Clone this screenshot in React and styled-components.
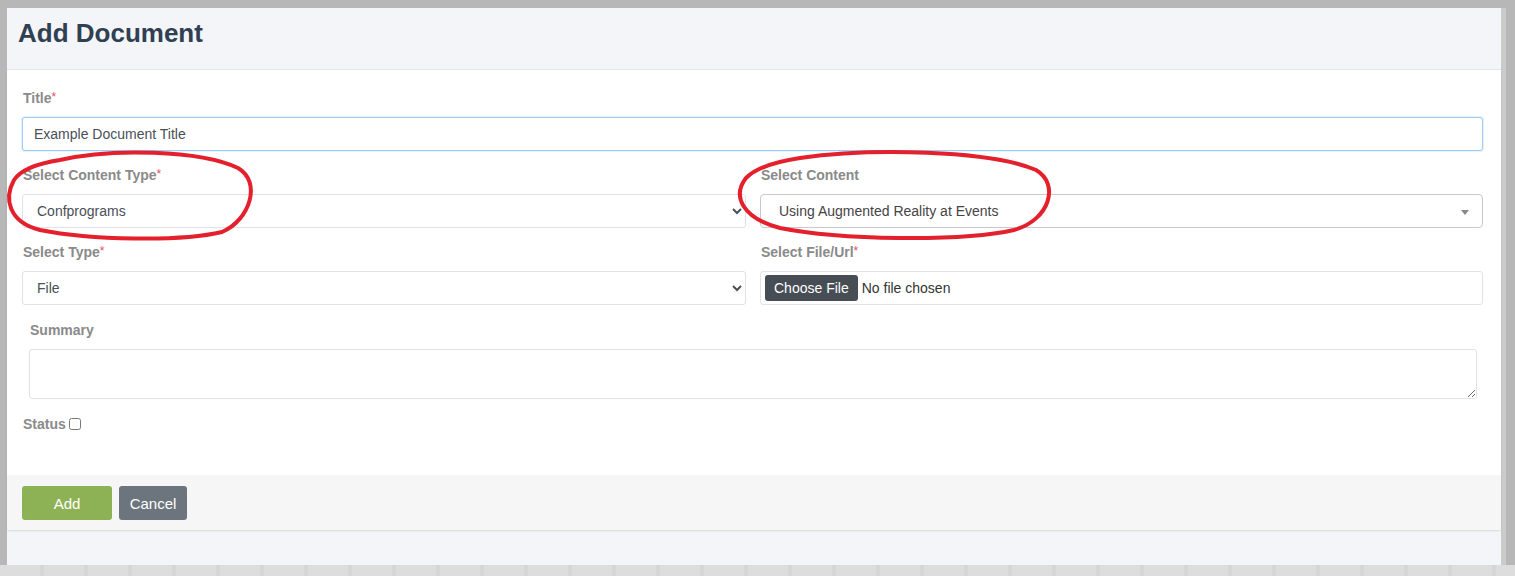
import React from "react";
import styled, { createGlobalStyle } from "styled-components";

const Global = createGlobalStyle`
  html, body { margin: 0; padding: 0; }
  body {
    background: #b6b7b6;
    font-family: "Liberation Sans", Arial, sans-serif;
    width: 1515px;
    height: 576px;
    overflow: hidden;
  }
  * { box-sizing: border-box; }
`;

const Frame = styled.div`
  position: relative;
  width: 1515px;
  height: 576px;
  padding: 8px 9px 0 7px;
  display: flex;
  flex-direction: column;
`;

const Screen = styled.div`
  flex: none;
  height: 557px;
  background: #f4f5f9;
  border-right: 5px solid #cacbca;
  display: flex;
  flex-direction: column;
`;

const BottomStrip = styled.div`
  flex: 1;
  margin: 0 -9px 0 -7px;
  background: repeating-linear-gradient(90deg, #dddddd 0 40px, #d6d6d6 40px 44px);
`;

const Header = styled.div`
  height: 62px;
  padding: 10px 11px 0;
  border-bottom: 1px solid #e6e7ea;
`;

const Heading = styled.h1`
  margin: 0;
  font-size: 26px;
  line-height: 30px;
  font-weight: bold;
  color: #2f4050;
`;

const Card = styled.div`
  background: #fff;
  border-radius: 0 0 3px 3px;
  box-shadow: 0 1px 2px rgba(0, 0, 0, 0.12);
  display: flex;
  flex-direction: column;
`;

const Body = styled.div`
  padding: 18px 18px 41px 15px;
  display: flex;
  flex-direction: column;
`;

const Grid = styled.div`
  display: grid;
  grid-template-columns: 724px 1fr;
  column-gap: 14px;
  margin-top: 14px;
`;

const Field = styled.div`
  display: flex;
  flex-direction: column;
  padding: 0 ${(p) => (p.$inset ? "6px" : "0")} 0 ${(p) => (p.$inset ? "7px" : "0")};
  margin-top: ${(p) => (p.$gap ? "15px" : "0")};
`;

const Label = styled.label`
  display: block;
  height: 20px;
  line-height: 20px;
  margin-bottom: 9px;
  padding-left: 1px;
  font-size: 14px;
  font-weight: bold;
  color: #8a8a8a;
`;

const Req = styled.span`
  color: #e0525c;
  font-weight: normal;
  position: relative;
  top: -2px;
  font-size: 12px;
`;

const TextInput = styled.input`
  height: 34px;
  width: 100%;
  border: 1px solid #9ccbf3;
  border-radius: 3px;
  padding: 0 11px;
  font-family: "Liberation Sans", Arial, sans-serif;
  font-size: 14px;
  color: #495057;
  outline: none;
  box-shadow: 0 0 0 1px rgba(156, 203, 243, 0.25);
`;

const NativeSelect = styled.select`
  height: 34px;
  width: 100%;
  border: 1px solid #dfe2e6;
  border-radius: 3px;
  padding: 0 10px;
  background: #fff;
  font-family: "Liberation Sans", Arial, sans-serif;
  font-size: 14px;
  color: #495057;
`;

const FakeSelect = styled.div`
  position: relative;
  height: 34px;
  border: 1px solid #c9c9c9;
  border-radius: 4px;
  padding: 0 18px;
  display: flex;
  align-items: center;
  font-size: 14px;
  color: #444;
`;

const Caret = styled.span`
  position: absolute;
  right: 13px;
  top: 15px;
  width: 0;
  height: 0;
  border-left: 4px solid transparent;
  border-right: 4px solid transparent;
  border-top: 5px solid #888;
`;

const FileBox = styled.div`
  height: 34px;
  border: 1px solid #dfe2e6;
  border-radius: 3px;
  padding: 0 4px;
  display: flex;
  align-items: center;
`;

const FileInput = styled.input`
  font-family: "Liberation Sans", Arial, sans-serif;
  font-size: 14px;
  color: #333;
  &::file-selector-button {
    height: 26px;
    padding: 0 9px;
    margin-right: 4px;
    border: none;
    border-radius: 3px;
    background: #474d54;
    color: #fff;
    font-family: "Liberation Sans", Arial, sans-serif;
    font-size: 14px;
  }
`;

const TextArea = styled.textarea`
  height: 50px;
  width: 100%;
  border: 1px solid #dfe2e6;
  border-radius: 3px;
  font-family: "Liberation Sans", Arial, sans-serif;
`;

const StatusRow = styled.div`
  margin-top: 15px;
  height: 20px;
  display: flex;
  align-items: center;
  gap: 3px;
  padding-left: 1px;
  font-size: 14px;
  font-weight: bold;
  color: #8a8a8a;
`;

const Check = styled.input`
  margin: 0;
  width: 12px;
  height: 12px;
`;

const Footer = styled.div`
  background: #f6f6f6;
  padding: 11px 15px 10px;
  display: flex;
  gap: 7px;
  border-radius: 0 0 3px 3px;
`;

const Button = styled.button`
  height: 34px;
  width: ${(p) => p.$w}px;
  border: none;
  border-radius: 3px;
  background: ${(p) => p.$bg};
  color: #fff;
  font-family: "Liberation Sans", Arial, sans-serif;
  font-size: 15px;
`;

const Annotations = styled.svg`
  position: absolute;
  left: 0;
  top: 0;
  pointer-events: none;
`;

export default function App() {
  return (
    <>
      <Global />
      <Frame>
        <Screen>
          <Header>
            <Heading>Add Document</Heading>
          </Header>
          <Card>
            <Body>
              <Field>
                <Label>
                  Title<Req>*</Req>
                </Label>
                <TextInput defaultValue="Example Document Title" />
              </Field>
              <Grid>
                <Field>
                  <Label>
                    Select Content Type<Req>*</Req>
                  </Label>
                  <NativeSelect defaultValue="conf">
                    <option value="conf">Confprograms</option>
                  </NativeSelect>
                </Field>
                <Field>
                  <Label>Select Content</Label>
                  <FakeSelect>
                    Using Augmented Reality at Events
                    <Caret />
                  </FakeSelect>
                </Field>
              </Grid>
              <Grid>
                <Field>
                  <Label>
                    Select Type<Req>*</Req>
                  </Label>
                  <NativeSelect defaultValue="file">
                    <option value="file">File</option>
                  </NativeSelect>
                </Field>
                <Field>
                  <Label>
                    Select File/Url<Req>*</Req>
                  </Label>
                  <FileBox>
                    <FileInput type="file" />
                  </FileBox>
                </Field>
              </Grid>
              <Field $inset $gap>
                <Label>Summary</Label>
                <TextArea />
              </Field>
              <StatusRow>
                Status <Check type="checkbox" />
              </StatusRow>
            </Body>
            <Footer>
              <Button $w={90} $bg="#8db255">
                Add
              </Button>
              <Button $w={68} $bg="#6c757d">
                Cancel
              </Button>
            </Footer>
          </Card>
        </Screen>
        <BottomStrip />
        <Annotations width="1515" height="576" viewBox="0 0 1515 576">
          <path
            d="M 60 160 C 110 148 200 150 238 168 C 262 182 250 220 222 232 C 180 242 90 240 40 230 C 8 222 4 198 14 180 C 22 168 40 163 60 160"
            fill="none"
            stroke="#e3202b"
            strokeWidth="4"
          />
          <path
            d="M 800 158 C 870 148 990 150 1036 170 C 1060 184 1050 220 1014 230 C 960 242 840 240 780 228 C 742 218 732 196 746 178 C 758 166 780 161 800 158"
            fill="none"
            stroke="#e3202b"
            strokeWidth="4"
          />
        </Annotations>
      </Frame>
    </>
  );
}
